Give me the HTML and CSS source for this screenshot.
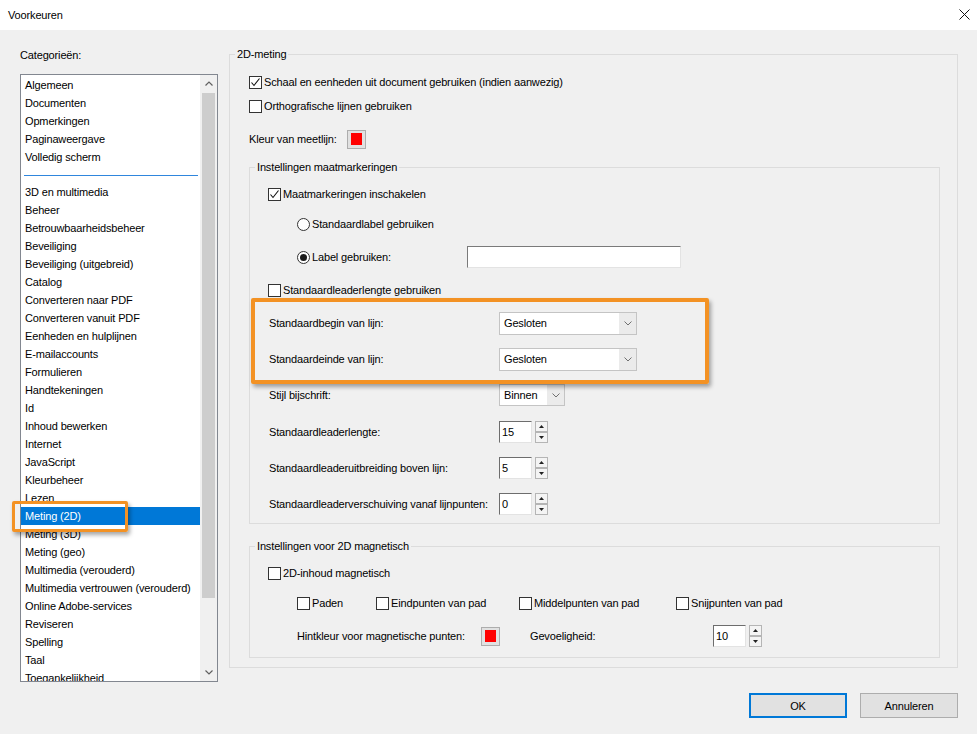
FILE: index.html
```html
<!DOCTYPE html>
<html lang="nl">
<head>
    <meta charset="UTF-8">
    <meta name="viewport" content="width=device-width, initial-scale=1.0">
    <title>Voorkeuren</title>
    <link rel="stylesheet" href="styles.css">
</head>
<body>

    <div class="titlebar">
        <span class="title">Voorkeuren</span>
        <svg class="close" width="11" height="11" viewBox="0 0 11 11">
            <path d="M0.5 0.5L10.5 10.5M10.5 0.5L0.5 10.5" stroke="#111" stroke-width="1" fill="none"/>
        </svg>
    </div>

    <div class="main">
        <!-- Lijst met categorieën -->
        <div class="sidebar">
            <div class="cat-label">Categorieën:</div>
            <div class="listbox">
                <ul class="cat-list">
                    <li>Algemeen</li>
                    <li>Documenten</li>
                    <li>Opmerkingen</li>
                    <li>Paginaweergave</li>
                    <li>Volledig scherm</li>
                    <li class="sep"></li>
                    <li>3D en multimedia</li>
                    <li>Beheer</li>
                    <li>Betrouwbaarheidsbeheer</li>
                    <li>Beveiliging</li>
                    <li>Beveiliging (uitgebreid)</li>
                    <li>Catalog</li>
                    <li>Converteren naar PDF</li>
                    <li>Converteren vanuit PDF</li>
                    <li>Eenheden en hulplijnen</li>
                    <li>E-mailaccounts</li>
                    <li>Formulieren</li>
                    <li>Handtekeningen</li>
                    <li>Id</li>
                    <li>Inhoud bewerken</li>
                    <li>Internet</li>
                    <li>JavaScript</li>
                    <li>Kleurbeheer</li>
                    <li>Lezen</li>
                    <li class="selected">Meting (2D)</li>
                    <li>Meting (3D)</li>
                    <li>Meting (geo)</li>
                    <li>Multimedia (verouderd)</li>
                    <li>Multimedia vertrouwen (verouderd)</li>
                    <li>Online Adobe-services</li>
                    <li>Reviseren</li>
                    <li>Spelling</li>
                    <li>Taal</li>
                    <li>Toegankelijkheid</li>
                </ul>
                <div class="scrollbar">
                    <div class="sb-btn">
                        <svg width="8" height="5" viewBox="0 0 8 5"><path d="M0.5 4.5L4 1L7.5 4.5" stroke="#606060" stroke-width="1.2" fill="none"/></svg>
                    </div>
                    <div class="thumb"></div>
                    <div class="sb-btn sb-down">
                        <svg width="8" height="5" viewBox="0 0 8 5"><path d="M0.5 0.5L4 4L7.5 0.5" stroke="#606060" stroke-width="1.2" fill="none"/></svg>
                    </div>
                </div>
            </div>
        </div>

        <!-- Instellingen 2D-meting -->
        <fieldset class="group outer">
            <legend>2D-meting</legend>
            <div class="group-body">
                <div class="row mt8">
                    <label class="check"><span class="box checked"><svg width="11" height="11" viewBox="0 0 11 11"><path d="M1.5 5.5L4 8.5L9.5 1.5" stroke="#111" stroke-width="1.1" fill="none"/></svg></span>Schaal en eenheden uit document gebruiken (indien aanwezig)</label>
                </div>
                <div class="row">
                    <label class="check"><span class="box"></span>Orthografische lijnen gebruiken</label>
                </div>
                <div class="row mt9">
                    <span class="kleur-label">Kleur van meetlijn:</span>
                    <span class="swatch"></span>
                </div>

                <fieldset class="group sub">
                    <legend>Instellingen maatmarkeringen</legend>
                    <div class="group-body">
                        <div class="row mt7">
                            <label class="check"><span class="box checked"><svg width="11" height="11" viewBox="0 0 11 11"><path d="M1.5 5.5L4 8.5L9.5 1.5" stroke="#111" stroke-width="1.1" fill="none"/></svg></span>Maatmarkeringen inschakelen</label>
                        </div>
                        <div class="row mt6 indent">
                            <label class="radio"><span class="dot"></span>Standaardlabel gebruiken</label>
                        </div>
                        <div class="row mt9 indent">
                            <label class="radio radio-field"><span class="dot on"></span>Label gebruiken:</label>
                            <span class="textbox"></span>
                        </div>
                        <div class="row mt9">
                            <label class="check"><span class="box"></span>Standaardleaderlengte gebruiken</label>
                        </div>
                        <div class="row mt9">
                            <span class="field-label">Standaardbegin van lijn:</span>
                            <div class="combo"><span class="combo-value">Gesloten</span><span class="combo-arrow"><svg width="8" height="5" viewBox="0 0 8 5"><path d="M0.5 0.5L4 4L7.5 0.5" stroke="#707070" stroke-width="1" fill="none"/></svg></span></div>
                        </div>
                        <div class="row mt12">
                            <span class="field-label">Standaardeinde van lijn:</span>
                            <div class="combo"><span class="combo-value">Gesloten</span><span class="combo-arrow"><svg width="8" height="5" viewBox="0 0 8 5"><path d="M0.5 0.5L4 4L7.5 0.5" stroke="#707070" stroke-width="1" fill="none"/></svg></span></div>
                        </div>
                        <div class="row mt12">
                            <span class="field-label">Stijl bijschrift:</span>
                            <div class="combo combo-small"><span class="combo-value">Binnen</span><span class="combo-arrow"><svg width="8" height="5" viewBox="0 0 8 5"><path d="M0.5 0.5L4 4L7.5 0.5" stroke="#707070" stroke-width="1" fill="none"/></svg></span></div>
                        </div>
                        <div class="row mt13">
                            <span class="field-label">Standaardleaderlengte:</span>
                            <div class="spin">
                                <span class="spin-input">15</span>
                                <span class="spin-buttons">
                                    <span class="spin-btn"><svg width="5" height="3" viewBox="0 0 5 3"><path d="M0 3L2.5 0L5 3Z" fill="#222"/></svg></span>
                                    <span class="spin-btn"><svg width="5" height="3" viewBox="0 0 5 3"><path d="M0 0L2.5 3L5 0Z" fill="#222"/></svg></span>
                                </span>
                            </div>
                        </div>
                        <div class="row mt12">
                            <span class="field-label">Standaardleaderuitbreiding boven lijn:</span>
                            <div class="spin">
                                <span class="spin-input">5</span>
                                <span class="spin-buttons">
                                    <span class="spin-btn"><svg width="5" height="3" viewBox="0 0 5 3"><path d="M0 3L2.5 0L5 3Z" fill="#222"/></svg></span>
                                    <span class="spin-btn"><svg width="5" height="3" viewBox="0 0 5 3"><path d="M0 0L2.5 3L5 0Z" fill="#222"/></svg></span>
                                </span>
                            </div>
                        </div>
                        <div class="row mt12">
                            <span class="field-label">Standaardleaderverschuiving vanaf lijnpunten:</span>
                            <div class="spin">
                                <span class="spin-input">0</span>
                                <span class="spin-buttons">
                                    <span class="spin-btn"><svg width="5" height="3" viewBox="0 0 5 3"><path d="M0 3L2.5 0L5 3Z" fill="#222"/></svg></span>
                                    <span class="spin-btn"><svg width="5" height="3" viewBox="0 0 5 3"><path d="M0 0L2.5 3L5 0Z" fill="#222"/></svg></span>
                                </span>
                            </div>
                        </div>
                    </div>
                </fieldset>

                <fieldset class="group sub magnet">
                    <legend>Instellingen voor 2D magnetisch</legend>
                    <div class="group-body">
                        <div class="row mt7">
                            <label class="check"><span class="box"></span>2D-inhoud magnetisch</label>
                        </div>
                        <div class="row mt6 indent">
                            <label class="check opt-paden"><span class="box"></span>Paden</label>
                            <label class="check opt-eind"><span class="box"></span>Eindpunten van pad</label>
                            <label class="check opt-midden"><span class="box"></span>Middelpunten van pad</label>
                            <label class="check"><span class="box"></span>Snijpunten van pad</label>
                        </div>
                        <div class="row mt9 indent">
                            <span class="hint-label">Hintkleur voor magnetische punten:</span>
                            <span class="swatch"></span>
                            <span class="sens-label">Gevoeligheid:</span>
                            <div class="spin">
                                <span class="spin-input">10</span>
                                <span class="spin-buttons">
                                    <span class="spin-btn"><svg width="5" height="3" viewBox="0 0 5 3"><path d="M0 3L2.5 0L5 3Z" fill="#222"/></svg></span>
                                    <span class="spin-btn"><svg width="5" height="3" viewBox="0 0 5 3"><path d="M0 0L2.5 3L5 0Z" fill="#222"/></svg></span>
                                </span>
                            </div>
                        </div>
                    </div>
                </fieldset>
            </div>
        </fieldset>
    </div>

    <div class="footer">
        <button class="btn btn-default">OK</button>
        <button class="btn">Annuleren</button>
    </div>

    <!-- Markeringen bovenop de dialoog -->
    <div class="mark mark-list"></div>
    <div class="mark mark-lines"></div>

</body>
</html>
```

FILE: styles.css
```css
* {
    margin: 0;
    padding: 0;
    box-sizing: border-box;
}

body {
    position: relative;
    width: 977px;
    height: 734px;
    overflow: hidden;
    background-color: #f0f0f0;
    font-family: "Liberation Sans", Arial, sans-serif;
    font-size: 11px;
    letter-spacing: -0.15px;
    color: #000;
}

/* Titelbalk */
.titlebar {
    height: 30px;
    background-color: #fff;
    display: flex;
    align-items: center;
    justify-content: space-between;
    padding: 0 7px 1px 8px;
}

.main {
    display: flex;
    padding: 16px 0 0 20px;
}

/* Categorieën */
.sidebar {
    width: 198px;
    margin-right: 11px;
}

.cat-label {
    padding-top: 1px;
    line-height: 16px;
}

.listbox {
    margin-top: 11px;
    height: 608px;
    border: 1px solid #828790;
    background-color: #fff;
    display: flex;
    overflow: hidden;
}

.cat-list {
    list-style: none;
    flex: 1;
    padding-top: 1px;
}

.cat-list li {
    height: 18px;
    line-height: 18px;
    padding-left: 4px;
    white-space: nowrap;
}

.cat-list li.selected {
    background-color: #0078d7;
    color: #fff;
}

.cat-list li.sep {
    height: 17px;
    padding: 9px 2px 0 3px;
}

.cat-list li.sep::after {
    content: "";
    display: block;
    height: 1px;
    background-color: #2f86dd;
}

.scrollbar {
    width: 17px;
    display: flex;
    flex-direction: column;
    background-color: #f0f0f0;
}

.sb-btn {
    height: 17px;
    display: flex;
    align-items: center;
    justify-content: center;
}

.sb-down {
    margin-top: auto;
}

.thumb {
    height: 505px;
    margin: 1px 2px 0;
    background-color: #cdcdcd;
}

/* Groepen */
.group {
    border: 1px solid #dcdcdc;
    min-width: 0;
}

.group legend {
    line-height: 16px;
    padding: 0 2px;
    margin-left: 5px;
}

.outer {
    width: 729px;
    height: 622px;
}

.outer > .group-body {
    padding: 0 17px 9px 19px;
}

.sub {
    margin-top: 8px;
}

.sub > .group-body {
    padding: 0 0 7px 18px;
}

.magnet {
    margin-top: 14px;
}

.magnet > .group-body {
    padding-bottom: 9px;
}

.row {
    display: flex;
    align-items: center;
    height: 24px;
    white-space: nowrap;
}

.mt6 { margin-top: 6px; }
.mt7 { margin-top: 7px; }
.mt8 { margin-top: 8px; }
.mt9 { margin-top: 9px; }
.mt12 { margin-top: 12px; }
.mt13 { margin-top: 13px; }

.indent {
    padding-left: 29px;
}

/* Selectievakjes en keuzerondjes */
.check,
.radio {
    display: flex;
    align-items: center;
}

.box {
    width: 13px;
    height: 13px;
    border: 1px solid #333;
    background-color: #fff;
    margin-right: 2px;
    flex: none;
    display: flex;
    align-items: center;
    justify-content: center;
}

.dot {
    width: 13px;
    height: 13px;
    border: 1px solid #333;
    border-radius: 50%;
    background-color: #fff;
    margin-right: 2px;
    flex: none;
    display: flex;
    align-items: center;
    justify-content: center;
}

.dot.on::after {
    content: "";
    width: 7px;
    height: 7px;
    border-radius: 50%;
    background-color: #1a1a1a;
}

.radio-field {
    width: 170px;
}

.textbox {
    width: 214px;
    height: 22px;
    background-color: #fff;
    border: 1px solid;
    border-color: #7a7a7a #e3e3e3 #e3e3e3 #7a7a7a;
}

.kleur-label {
    width: 98px;
}

.swatch {
    width: 19px;
    height: 19px;
    border: 1px solid #adadad;
    background-color: #e1e1e1;
    display: flex;
    align-items: center;
    justify-content: center;
    flex: none;
}

.swatch::after {
    content: "";
    width: 11px;
    height: 12px;
    background-color: #f00;
}

.field-label {
    width: 231px;
    padding-left: 1px;
}

/* Keuzelijsten */
.combo {
    width: 138px;
    height: 23px;
    display: flex;
    border: 1px solid #c4c4c4;
    background-color: #fff;
}

.combo-small {
    width: 66px;
    height: 22px;
}

.combo-value {
    flex: 1;
    padding-left: 4px;
    line-height: 21px;
}

.combo-arrow {
    width: 17px;
    background-color: #ebebeb;
    display: flex;
    align-items: center;
    justify-content: center;
}

/* Numerieke velden */
.spin {
    display: flex;
    align-items: center;
}

.spin-input {
    width: 33px;
    height: 22px;
    line-height: 20px;
    padding-left: 2px;
    background-color: #fff;
    border: 1px solid;
    border-color: #6d6d6d #e3e3e3 #e3e3e3 #6d6d6d;
}

.spin-buttons {
    margin-left: 3px;
    width: 13px;
    height: 22px;
    display: flex;
    flex-direction: column;
    justify-content: space-between;
}

.spin-btn {
    height: 11px;
    border: 1px solid #b5b5b5;
    background-color: #f4f4f4;
    display: flex;
    align-items: center;
    justify-content: center;
}

/* Magnetisch */
.opt-paden { width: 79px; }
.opt-eind { width: 143px; }
.opt-midden { width: 157px; }

.hint-label {
    width: 184px;
}

.sens-label {
    width: 183px;
    margin-left: 30px;
}

/* Knoppen */
.footer {
    display: flex;
    justify-content: flex-end;
    gap: 13px;
    padding: 11px 19px 0 0;
}

.btn {
    width: 98px;
    height: 25px;
    background-color: #e1e1e1;
    border: 1px solid #adadad;
    font-family: inherit;
    font-size: 11px;
    letter-spacing: inherit;
    color: #000;
}

.btn-default {
    border: 2px solid #0078d7;
}

/* Oranje markeringen */
.mark {
    position: absolute;
    border: 3px solid #f39224;
    border-radius: 2px;
    box-shadow: 2px 3px 4px rgba(0, 0, 0, 0.35);
    pointer-events: none;
}

.mark-list {
    left: 12px;
    top: 501px;
    width: 116px;
    height: 31px;
}

.mark-lines {
    left: 251px;
    top: 298px;
    width: 458px;
    height: 86px;
    border-width: 4px;
}
```
